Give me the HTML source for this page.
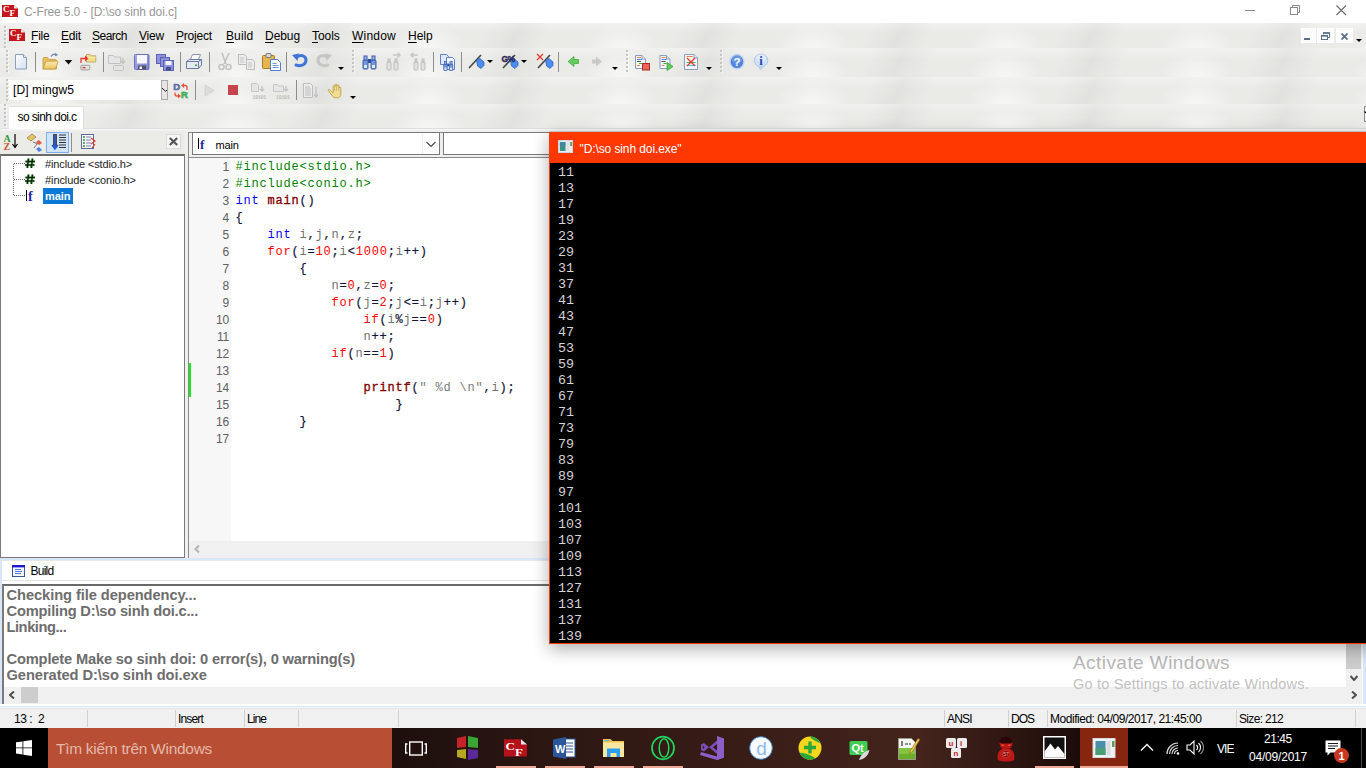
<!DOCTYPE html>
<html lang="vi">
<head>
<meta charset="utf-8">
<title>C-Free 5.0 - [D:\so sinh doi.c]</title>
<style>
*{box-sizing:border-box;margin:0;padding:0}
html,body{width:1366px;height:768px;overflow:hidden;background:#fff}
body{position:relative;font-family:"Liberation Sans",sans-serif;font-size:12px;color:#000}
.abs{position:absolute}
.t{position:absolute;white-space:pre;line-height:1}
/* textured chrome */
#chrome{position:absolute;left:0;top:23px;width:1366px;height:107px;background:#eaeae7}
#chrome i{position:absolute;left:0;width:1366px;display:block;background:
 radial-gradient(ellipse 38px 95% at 50% 100%,rgba(255,255,255,.62),rgba(255,255,255,.25) 60%,rgba(255,255,255,0) 100%) -51px 0/192px 100% repeat-x,
 linear-gradient(115deg,rgba(0,0,0,0) 0,rgba(0,0,0,0) 30%,rgba(120,120,110,.07) 45%,rgba(0,0,0,0) 60%,rgba(0,0,0,0) 100%) 45px 0/192px 100% repeat-x,
 linear-gradient(rgba(255,255,255,.35),rgba(255,255,255,0) 40%)}
#titlebar{position:absolute;left:0;top:0;width:1366px;height:23px;background:#fff}
#tabline{position:absolute;left:0;top:128px;width:1366px;height:3px;background:linear-gradient(#dededc 0,#dededc 1px,#f6f6f6 1px,#f6f6f6 2px,#f1f1f1 2px)}
#work{position:absolute;left:0;top:131px;width:1366px;height:597px;background:#f0f0f0}
/* menu */
.menu span.t{font-size:12px;top:30px;color:#000;letter-spacing:-0.2px}
.menu u{text-decoration:underline;text-underline-offset:1.5px}
/* code */
.ln{position:absolute;left:193px;width:36px;text-align:right;font-size:12px;color:#606060;letter-spacing:-0.2px;margin-top:0.8px;line-height:17px;height:17px}
.cl{position:absolute;left:235.500px;font-family:"Liberation Mono",monospace;font-size:12px;letter-spacing:0.8px;line-height:17px;height:17px;white-space:pre;color:#15153a;margin-top:0.6px;-webkit-text-stroke:0.2px #15153a}
.kw{color:#0000ff;-webkit-text-stroke:0}.fl{color:#ff0000;-webkit-text-stroke:0}.pp{color:#008000;-webkit-text-stroke:0}.fn{color:#800000;-webkit-text-stroke:0.3px #800000}.nm{color:#ff0000;-webkit-text-stroke:0}.st{color:#7a7a7a;-webkit-text-stroke:0}.id{color:#707070;-webkit-text-stroke:0}
.con{position:absolute;left:558px;font-family:"Liberation Mono",monospace;font-size:13.33px;line-height:16px;height:16px;color:#d4d4d4;white-space:pre}
.bl{position:absolute;left:6.5px;margin-top:-0.5px;font-weight:bold;font-size:14.67px;color:#6d6d6d;line-height:16px;white-space:pre}
.sb{position:absolute;top:711.700px;font-size:12px;line-height:14px;white-space:pre;color:#000}
.sep{position:absolute;top:710px;width:1px;height:17px;background:#d0d0d0}
</style>
</head>
<body>
<!-- TITLE BAR -->
<div id="titlebar"></div>
<div id="chrome"><i style="top:0;height:25px"></i><i style="top:25px;height:29px"></i><i style="top:54px;height:27px"></i><i style="top:81px;height:26px"></i></div>
<div id="tabline"></div>
<div id="work"></div>
<!-- title bar content -->
<svg class="abs" style="left:2px;top:5px" width="16" height="12" viewBox="0 1 16 14" preserveAspectRatio="none">
  <path d="M0 1h12l4 4v10H0z" fill="#c4161c"/><path d="M12 1l4 4h-4z" fill="#e9e9e9"/>
  <text x="1" y="9" font-family="Liberation Serif,serif" font-weight="bold" font-size="9" fill="#fff">C</text>
  <text x="7.5" y="14" font-family="Liberation Serif,serif" font-weight="bold" font-size="9" fill="#fff">F</text>
</svg>
<span class="t" id="ttl" style="left:24px;top:6px;font-size:12px;color:#979797;letter-spacing:-0.12px">C-Free 5.0 - [D:\so sinh doi.c]</span>
<!-- window controls -->
<div class="abs" style="left:1245px;top:10px;width:10px;height:1px;background:#8a8a8a"></div>
<svg class="abs" style="left:1290px;top:5px" width="10" height="10" viewBox="0 0 10 10" fill="none" stroke="#8a8a8a" stroke-width="1"><path d="M2.5 2.5v-2h7v7h-2"/><rect x="0.5" y="2.5" width="7" height="7"/></svg>
<svg class="abs" style="left:1336px;top:5px" width="11" height="11" viewBox="0 0 11 11" fill="none" stroke="#6a6a6a" stroke-width="1.100"><path d="M0.500 0.500l9.500 9.500M10 0.500l-9.500 9.500"/></svg>

<!-- menu bar -->
<svg class="abs" style="left:9px;top:29px" width="16" height="12" viewBox="0 1 16 14" preserveAspectRatio="none">
  <path d="M0 1h12l4 4v10H0z" fill="#c4161c"/><path d="M12 1l4 4h-4z" fill="#e9e9e9"/>
  <text x="1" y="9" font-family="Liberation Serif,serif" font-weight="bold" font-size="9" fill="#fff">C</text>
  <text x="7.5" y="14" font-family="Liberation Serif,serif" font-weight="bold" font-size="9" fill="#fff">F</text>
</svg>
<svg class="abs" style="left:0;top:24px" width="10" height="24" viewBox="0 0 10 24"><use href="#grip" x="4" y="2"/></svg>
<div class="menu">
<span class="t" style="left:31px"><u>F</u>ile</span>
<span class="t" style="left:61px"><u>E</u>dit</span>
<span class="t" style="left:92px;letter-spacing:-0.5px"><u>S</u>earch</span>
<span class="t" style="left:139px"><u>V</u>iew</span>
<span class="t" style="left:176px"><u>P</u>roject</span>
<span class="t" style="left:226px;letter-spacing:0.1px"><u>B</u>uild</span>
<span class="t" style="left:265px;letter-spacing:-0.05px"><u>D</u>ebug</span>
<span class="t" style="left:312px;letter-spacing:-0.05px"><u>T</u>ools</span>
<span class="t" style="left:352px;letter-spacing:0.2px"><u>W</u>indow</span>
<span class="t" style="left:408px;letter-spacing:0px"><u>H</u>elp</span>
</div>
<!-- mdi child controls -->
<div class="abs" style="left:1301px;top:28px;width:15px;height:15px;background:#fbfbfb;border:1px solid #fff"></div>
<div class="abs" style="left:1317px;top:28px;width:17px;height:15px;background:#fbfbfb;border:1px solid #fff"></div>
<div class="abs" style="left:1336px;top:28px;width:17px;height:15px;background:#fbfbfb;border:1px solid #fff"></div>
<div class="abs" style="left:1304px;top:38px;width:6px;height:2px;background:#5a6f8a"></div>
<svg class="abs" style="left:1321px;top:32px" width="9" height="8" viewBox="0 0 9 8" fill="none" stroke="#5a6f8a"><path d="M2.500 2.500v-1.500h6v4.500h-2" stroke-width="1"/><path d="M2 1h7" stroke-width="1.600"/><rect x="0.500" y="3.500" width="6" height="4"/><path d="M0 3.800h7" stroke-width="1.600"/></svg>
<svg class="abs" style="left:1341px;top:33px" width="7" height="7" viewBox="0 0 7 7" fill="none" stroke="#5a6f8a" stroke-width="1.800"><path d="M0.500 0.500l6 6M6.500 0.500l-6 6"/></svg>
<svg class="abs" style="left:1356px;top:39px" width="6" height="3" viewBox="0 0 6 3"><path d="M0 0h6l-3 3z" fill="#000"/></svg>
<!-- TOOLBAR 1 -->
<svg class="abs" style="left:0;top:48px" width="800" height="28" viewBox="0 0 800 28">
 <defs>
  <linearGradient id="gdoc" x1="0" y1="0" x2="1" y2="1"><stop offset="0" stop-color="#fff"/><stop offset="1" stop-color="#d3deef"/></linearGradient>
  <linearGradient id="gfold" x1="0" y1="0" x2="0" y2="1"><stop offset="0" stop-color="#fbe9b4"/><stop offset="1" stop-color="#ecc462"/></linearGradient>
  <linearGradient id="gflop" x1="0" y1="0" x2="1" y2="1"><stop offset="0" stop-color="#a8acE6"/><stop offset="1" stop-color="#7d82d0"/></linearGradient>
  <g id="grip"><path d="M1 0v24" stroke="#c4c4c2" stroke-width="2" stroke-dasharray="2 2"/><path d="M2.5 1v24" stroke="#fbfbfb" stroke-width="1" stroke-dasharray="2 2"/></g>
  <g id="dd"><path d="M0 0h6l-3 3z" fill="#000"/></g>
  <g id="sepv"><path d="M0.500 1v20" stroke="#8d8d8d"/></g>
  <g id="doc"><path d="M0.500 0.500h8l3 3v11.500h-11z" fill="url(#gdoc)" stroke="#8a9cc0"/><path d="M8.500 0.500v3h3" fill="#eef2fa" stroke="#8a9cc0"/></g>
  <g id="docg"><path d="M0.5 0.5h6l2 2v8h-8z" fill="#ededed" stroke="#bcbcbc"/><path d="M2 4h4M2 6h4M2 8h4" stroke="#c4c4c4"/></g>
  <g id="bino"><rect x="1" y="6" width="5" height="9" rx="1" fill="#7398dc" stroke="#3a5cae"/><rect x="9" y="6" width="5" height="9" rx="1" fill="#7398dc" stroke="#3a5cae"/><rect x="2" y="2" width="3" height="4" fill="#9ab4e8" stroke="#3a5cae"/><rect x="10" y="2" width="3" height="4" fill="#9ab4e8" stroke="#3a5cae"/><rect x="6" y="5" width="3" height="4" fill="#2f4f9a"/><rect x="2" y="11" width="3" height="3" fill="#dfe8fa"/><rect x="10" y="11" width="3" height="3" fill="#dfe8fa"/></g>
  <g id="binog"><rect x="1" y="6" width="4" height="8" rx="1" fill="#e2e2e2" stroke="#bdbdbd"/><rect x="8" y="6" width="4" height="8" rx="1" fill="#e2e2e2" stroke="#bdbdbd"/><rect x="2" y="3" width="2" height="3" fill="#d5d5d5" stroke="#bdbdbd"/><rect x="9" y="3" width="2" height="3" fill="#d5d5d5" stroke="#bdbdbd"/></g>
  <g id="flag"><path d="M0 14L12 1" stroke="#4a4a4a" stroke-width="1.700"/><path d="M7.500 6L11 4.600L15 8v3.500l-3 3l-3.500-2.500z" fill="#4d8df0" stroke="#2455b8" stroke-width=".7"/></g>
 </defs>
 <use href="#grip" x="6" y="2"/>
 <!-- new -->
 <use href="#doc" x="15" y="6"/>
 <use href="#sepv" x="35" y="3"/>
 <!-- open -->
 <path d="M43 21v-10.500q0-1 1-1h3.500l1.500 2h6.500q1 0 1 1v8.500z" fill="#e8c060" stroke="#c49a3a" stroke-width=".8"/><path d="M43 21l2.500-7q.3-.8 1.200-.8h10.500q1 0 .7 1l-2.400 6.800z" fill="url(#gfold)" stroke="#c49a3a" stroke-width=".8"/><path d="M51 8.500c1.500-2.500 4-3 6-1.500" fill="none" stroke="#6a7fa8" stroke-width="1.200"/><path d="M55.500 5l2.500 2.300-3.300.8z" fill="#6a7fa8"/>
 <path d="M64.700 12h7.600l-3.800 4.400z" fill="#111"/>
 <!-- open project -->
 <path d="M86.500 14v-7.500h3.500l1 1.300h4.800v6.200z" fill="#f3dc8c" stroke="#b9a05a" stroke-width=".8"/><path d="M87 9.500h8.500" stroke="#fbeeb8"/><path d="M81 15v-4.500h5" fill="none" stroke="#ee3a2e" stroke-width="1.300"/><path d="M85 7.500l3.500 3-3.500 3z" fill="#ee3a2e"/><rect x="80.800" y="17.300" width="9" height="4.600" rx="1" fill="#e4e4e4" stroke="#8d8d8d" stroke-width=".8"/><rect x="82.500" y="19" width="3" height="1.300" fill="#d33"/>
 <use href="#sepv" x="103" y="3"/>
 <!-- disabled close project -->
 <path d="M108.500 15.500v-8h5l1 1.500h6v6.500z" fill="#e6e6e6" stroke="#c2c2c2"/><rect x="113.500" y="17.500" width="10" height="5" rx="1" fill="#e4e4e4" stroke="#c2c2c2"/><path d="M123 10v5m-2-2l2 2.500 2-2.500" fill="none" stroke="#c2c2c2" stroke-width="1.4"/>
 <!-- save -->
 <rect x="134.500" y="6.500" width="14.500" height="15" rx="1" fill="url(#gflop)" stroke="#6a6fc0"/><rect x="137" y="7" width="10" height="8.500" fill="#f6f6fc"/><rect x="138" y="17.500" width="8" height="4" fill="#4e5066"/><rect x="139.500" y="18.500" width="2.500" height="2.500" fill="#f0f0f8"/>
 <!-- save all -->
 <rect x="156.500" y="6.500" width="9" height="9" fill="#8d92dc" stroke="#5a60b4"/><rect x="160.500" y="9.500" width="9" height="9" fill="#8d92dc" stroke="#5a60b4"/><rect x="163.500" y="12.500" width="10" height="10" fill="#8d92dc" stroke="#5a60b4"/><rect x="165.500" y="13" width="6" height="4" fill="#f4f4fb"/><rect x="166" y="19" width="5" height="3.500" fill="#4a4e90"/>
 <use href="#sepv" x="180" y="3"/>
 <!-- print -->
 <path d="M190.500 11.500l2-5h8l-2 5z" fill="#fff" stroke="#8a94b4"/><path d="M186.500 13.500l3-2h12v5.500l-3 3.500h-12z" fill="#e3e8f4" stroke="#6a78a4"/><path d="M186.500 13.500h12v7M198.500 13.500l3-2" fill="none" stroke="#6a78a4"/><rect x="195" y="16.500" width="2" height="1.500" fill="#3a3"/>
 <use href="#sepv" x="209" y="3"/>
 <!-- cut disabled -->
 <path d="M222 5l4 11M229 5l-5 11" stroke="#c3c3c3" stroke-width="1.600" fill="none"/><circle cx="221.500" cy="19" r="2.500" fill="none" stroke="#c3c3c3" stroke-width="1.600"/><circle cx="228.500" cy="19" r="2.500" fill="none" stroke="#c3c3c3" stroke-width="1.600"/>
 <!-- copy disabled -->
 <use href="#docg" x="238" y="6"/><use href="#docg" x="246" y="11"/>
 <!-- paste -->
 <rect x="262.500" y="7.500" width="12" height="13" rx="1" fill="#e6b54d" stroke="#a87a1c"/><rect x="266" y="5.500" width="5" height="4" rx="1" fill="#d9d9d9" stroke="#7a7a7a"/><path d="M270.500 11.500h7l3 3v8h-10z" fill="#fff" stroke="#4f7fd0"/><path d="M272.500 15.500h4M272.500 17.500h6M272.500 19.500h6" stroke="#6a98e0"/>
 <use href="#sepv" x="286" y="3"/>
 <!-- undo -->
 <path d="M296 17c6 2 10-1 10-5s-5-6-9-3" fill="none" stroke="#3f74d8" stroke-width="3" stroke-linecap="round"/><path d="M292 7l7-1.500-1.500 7.500z" fill="#3f74d8"/>
 <!-- redo disabled -->
 <path d="M328 17c-6 2-10-1-10-5s5-6 9-3" fill="none" stroke="#c6c6c6" stroke-width="3" stroke-linecap="round"/><path d="M332 7l-7-1.500 1.500 7.500z" fill="#c6c6c6"/>
 <use href="#dd" x="338" y="19"/>
 <use href="#grip" x="352" y="2"/>
 <use href="#bino" x="362" y="6"/>
 <use href="#binog" x="386" y="8"/><path d="M393 7h7m-2.500-2.500l2.500 2.500-2.500 2.500" fill="none" stroke="#c6c6c6" stroke-width="1.500"/>
 <use href="#binog" x="413" y="8"/><path d="M418 7h-7m2.500-2.500l-2.500 2.500 2.500 2.500" fill="none" stroke="#c6c6c6" stroke-width="1.500"/>
 <use href="#sepv" x="433" y="3"/>
 <!-- find in files -->
 <path d="M440.500 6.500h6l2 2v8h-8z" fill="#dfe8fa" stroke="#5b7fc9"/><path d="M446.500 9.500h6l2 2v10h-8z" fill="#eef3fd" stroke="#5b7fc9"/><g transform="translate(443,12) scale(.7)"><use href="#bino"/></g>
 <use href="#sepv" x="461" y="3"/>
 <!-- bookmarks -->
 <use href="#flag" x="469" y="6"/><use href="#dd" x="487" y="12" transform="scale(1)"/>
 <use href="#flag" x="503" y="6"/><text x="501.500" y="13.500" font-family="Liberation Sans,sans-serif" font-weight="bold" font-size="8.500" fill="#2a2a5a" stroke="#2a2a5a" stroke-width=".4" letter-spacing="-0.5">G%</text><use href="#dd" x="521" y="12"/>
 <use href="#flag" x="538" y="6"/><path d="M537 6l6 6M543 6l-6 6" stroke="#e0392d" stroke-width="1.300"/>
 <use href="#sepv" x="558" y="3"/>
 <!-- back / forward -->
 <path d="M568 13.500l6-5v3h4.500v4h-4.500v3z" fill="#62cc5e" stroke="#3aa83a" stroke-width=".7"/>
 <path d="M602 13.500l-6-5v3h-4v4h4v3z" fill="#c9c9c9"/>
 <use href="#dd" x="612" y="19"/>
 <use href="#grip" x="626" y="2"/>
 <!-- doc icons -->
 <g transform="translate(635,7)"><path d="M0.500 0.500h6.500l3.500 3.500v9.500h-10z" fill="#f4f7fc" stroke="#8a9cc0"/><path d="M7 0.500v3.500h3.500" fill="#dfe6f4" stroke="#8a9cc0"/><path d="M2 2.500h4" stroke="#e8824a"/><path d="M2 4.500h5" stroke="#4a8ae8"/><path d="M2 6.500h4" stroke="#555"/><path d="M4 8.500h4" stroke="#4ab04a"/><path d="M2 10.500h3" stroke="#e8824a"/><rect x="7.500" y="8.500" width="7" height="6.500" fill="#e8665a" stroke="#b5261c"/></g>
 <g transform="translate(659.500,7)"><path d="M0.500 0.500h6.500l3.500 3.500v9.500h-10z" fill="#f4f7fc" stroke="#8a9cc0"/><path d="M7 0.500v3.500h3.500" fill="#dfe6f4" stroke="#8a9cc0"/><path d="M2 2.500h4" stroke="#e8824a"/><path d="M2 4.500h5" stroke="#4a8ae8"/><path d="M2 6.500h4" stroke="#555"/><path d="M4 8.500h3" stroke="#4ab04a"/><path d="M2 10.500h3" stroke="#e8824a"/><path d="M7.500 7.500l6 4-6 4z" fill="#5fd05a" stroke="#2f9a2e" stroke-width=".7"/></g>
 <g transform="translate(684,6)"><path d="M0.500 0.500h9.500l3.500 3.500v11.500h-13z" fill="#f4f7fc" stroke="#8a9cc0"/><path d="M10 0.500v3.500h3.500" fill="#dfe6f4" stroke="#8a9cc0"/><path d="M2.500 2.500h6" stroke="#e8824a"/><path d="M2.500 8.500h9" stroke="#4ab04a"/><path d="M2.500 11.500h9" stroke="#4ac0e8"/><path d="M3 4l8 8M11 4l-8 8" stroke="#e0392d" stroke-width="1.300"/></g>
 <use href="#dd" x="706" y="19"/>
 <use href="#grip" x="720" y="2"/>
 <!-- help / info -->
 <circle cx="737" cy="13.700" r="7" fill="#4f84d8" stroke="#c4d6f4" stroke-width="1.400"/><circle cx="737" cy="11.500" r="5" fill="#7aa6ea" opacity=".55"/><text x="737" y="17.800" text-anchor="middle" font-family="Liberation Sans,sans-serif" font-weight="bold" font-size="11.500" fill="#fff">?</text>
 <path d="M759 18.500l1.500 3.500 3-3.500z" fill="#cfe0f8" stroke="#a4c0ec" stroke-width=".8"/><ellipse cx="761" cy="12.500" rx="6.800" ry="6.500" fill="#cfe0f8" stroke="#a4c0ec" stroke-width=".8"/><ellipse cx="761" cy="10" rx="5" ry="3.500" fill="#e8f0fc" opacity=".7"/><text x="761" y="16.500" text-anchor="middle" font-family="Liberation Serif,serif" font-weight="bold" font-size="12.500" fill="#1f47b0">i</text>
 <use href="#dd" x="776" y="19"/>
</svg>

<!-- TOOLBAR 2 -->
<div class="abs" style="left:9px;top:80px;width:152px;height:20px;background:#fff"></div>
<div class="abs" style="left:161px;top:80px;width:7px;height:20px;background:#e6e6e6;border:1px solid #a9a9a9"></div>
<svg class="abs" style="left:162px;top:86px" width="5" height="8" viewBox="0 0 5 8" fill="none" stroke="#222" stroke-width="1"><path d="M-0.500 1.500l4 3.800 2.500-2"/></svg>
<span class="t" style="left:13px;top:84px;font-size:12px;letter-spacing:0.1px" id="mingw">[D] mingw5</span>
<svg class="abs" style="left:0;top:77px" width="400" height="26" viewBox="0 0 400 26">
 <use href="#grip" x="6" y="2"/>
 <text x="173.300" y="13" font-family="Liberation Sans,sans-serif" font-weight="bold" font-size="9.500" fill="#5a6fa3" stroke="#5a6fa3" stroke-width=".6">D</text>
 <text x="181" y="21" font-family="Liberation Sans,sans-serif" font-weight="bold" font-size="9.500" fill="#3cb054" stroke="#3cb054" stroke-width=".6">R</text>
 <path d="M187 13v-2.500q0-2-2-2h-2" fill="none" stroke="#f0503a" stroke-width="1.300"/><path d="M184 6l-3 2.500 3 2.500z" fill="#f0503a"/>
 <path d="M175 15.500v1.500q0 2 2 2h2" fill="none" stroke="#f0503a" stroke-width="1.300"/><path d="M178 16.500l3 2.500-3 2.500z" fill="#f0503a"/>
 <use href="#sepv" x="195" y="2"/>
 <path d="M205 8l9 5.500-9 5.500z" fill="#dcdcdc" stroke="#c9c9c9" stroke-width=".6"/>
 <rect x="228" y="8" width="10" height="10" fill="#c8444c"/>
 <g transform="translate(251,6)"><path d="M0.500 0.500h5l2 2v6h-7z" fill="#e6e6e6" stroke="#c6c6c6"/><path d="M11 3v5m-2-2l2 2 2-2" fill="none" stroke="#c6c6c6" stroke-width="1.500"/><text x="1.500" y="16" font-family="Liberation Mono,monospace" font-size="5" fill="#bdbdbd" font-weight="bold" letter-spacing="-0.3">10101</text></g>
 <g transform="translate(273,6)"><path d="M0.500 8.500v-7h4l1 1.500h5v5.500z" fill="#e6e6e6" stroke="#c6c6c6"/><path d="M13 3v5m-2-2l2 2 2-2" fill="none" stroke="#c6c6c6" stroke-width="1.500"/><text x="3" y="16" font-family="Liberation Mono,monospace" font-size="5" fill="#bdbdbd" font-weight="bold" letter-spacing="-0.3">10101</text></g>
 <use href="#sepv" x="296" y="2"/>
 <g transform="translate(303,6)"><path d="M0.500 0.500h7l2 2v12h-9z" fill="#ececec" stroke="#bdbdbd"/><path d="M2 4h5M2 6h6M2 8h6M2 10h6M2 12h6" stroke="#bdbdbd"/><path d="M13 4v10m-2-2.500l2 2.500 2-2.500" fill="none" stroke="#c2c2c2" stroke-width="1.300"/></g>
 <!-- hand -->
 <g transform="translate(328,5.500) scale(.88)"><path d="M3 9c-2-2-4-1-2 1l4 5.500c1 1 2 2 5 2s4.500-2 4.500-4v-7c0-1.600-2-1.600-2 0v-2.500c0-1.600-2.200-1.600-2.200 0v-1c0-1.600-2.200-1.600-2.200 0v1.500c0-1.600-2.200-1.600-2.200 0v7.500z" fill="#f1dc94" stroke="#b89a3a" stroke-width=".9"/><path d="M7.400 4.500v5M9.600 3.500v6M11.800 5v4.500" stroke="#c9ac4e" stroke-width=".8" fill="none"/></g>
 <use href="#dd" x="350" y="19"/>
</svg>
<!-- TAB ROW -->
<div class="abs" style="left:9px;top:106px;width:75px;height:23px;background:#fff;border-top:1px solid #e2e2e0;border-right:1px solid #dcdcda"></div>
<svg class="abs" style="left:0;top:103px" width="10" height="26" viewBox="0 0 10 26"><use href="#grip" x="4" y="1"/></svg>
<span class="t" style="left:17.5px;top:111px;font-size:12px;letter-spacing:-0.6px" id="tabtxt">so sinh doi.c</span>
<svg class="abs" style="left:1364px;top:106px" width="2" height="16" viewBox="0 0 2 16"><rect x="0.500" y="0.500" width="4" height="15" fill="#f4f4f4" stroke="#8a8a8a"/><path d="M0 5.500h3v1.500h-2z" fill="#000"/></svg>

<!-- LEFT PANEL -->
<div class="abs" style="left:0;top:131px;width:185px;height:23px;background:#ebebe8"></div>
<div class="abs" style="left:0;top:154px;width:185px;height:404px;background:#fff;border:1px solid #7a7a7a;border-top:2px solid #6a6a6a"></div>
<div class="abs" style="left:185px;top:131px;width:4px;height:428px;background:#f0f0f0"></div>
<svg class="abs" style="left:0;top:130px" width="185" height="24" viewBox="0 0 185 24">
 <text x="3.500" y="12" font-family="Liberation Serif,serif" font-weight="bold" font-size="10" fill="#2f9a3a">A</text>
 <text x="3.500" y="20" font-family="Liberation Serif,serif" font-weight="bold" font-size="10" fill="#d0542a">Z</text>
 <path d="M15 4v13m-2.500-3l2.500 3.500 2.500-3.500" fill="none" stroke="#000" stroke-width="1.200"/>
 <path d="M27 8l5-4 4 3-5 4z" fill="#e6c36a" stroke="#9a7a2a" stroke-width=".7"/><path d="M33 12l5 2m-1 0l-3 4" fill="none" stroke="#555" stroke-width=".8"/><path d="M36 12l3-2 3 3-3 2z" fill="#e45a4a"/><path d="M36 19l3-2 3 3-3 2z" fill="#4a84e0"/>
 <rect x="46.500" y="2.500" width="22" height="20" fill="#cfe3fa" stroke="#7fb0ea"/>
 <path d="M55 4v13" stroke="#4a4a4a" stroke-width="4"/><path d="M55 5v13m-3-3l3 4 3-4" fill="none" stroke="#2a5ae0" stroke-width="1.500"/><path d="M59 5h7M59 7.500h7M59 10h7M59 12.500h7M59 15h7M59 17.500h7" stroke="#333" stroke-width="1"/>
 <path d="M71.500 3v19" stroke="#8d8d8d"/>
 <rect x="81.500" y="4.500" width="12" height="14" fill="#f6f6fb" stroke="#5b6a96"/><path d="M83 7h2M83 10h2M83 13h2M83 16h2" stroke="#3a8a3a" stroke-width="1.500"/><path d="M86 7h5M86 10h5M86 13h5M86 16h5" stroke="#7a86a6"/><path d="M91 8l4 3-4 3M95 14l-3 4" fill="none" stroke="#e0392d" stroke-width="1.200"/>
 <rect x="166.500" y="4.500" width="14" height="14" fill="#f7f7f7" stroke="#dadada"/><path d="M169.800 8l7.400 7M177.200 8l-7.400 7" stroke="#555" stroke-width="2.200"/>
</svg>
<!-- tree -->
<svg class="abs" style="left:0;top:155px" width="185" height="60" viewBox="0 0 185 60">
 <path d="M13.500 9v32M14 8.500h11M14 24.500h11M14 40.500h11" stroke="#6a6a6a" stroke-dasharray="1 1" fill="none" shape-rendering="crispEdges"/>
 <g fill="none"><path d="M28.500 3.500l-1.200 9.500M32.500 3.500l-1.200 9.500M25.500 6.500h9.500M25 10h9.500" stroke="#9ad09a" stroke-width="2.600"/><path d="M28.500 3.500l-1.200 9.500M32.500 3.500l-1.200 9.500M25.500 6.500h9.500M25 10h9.500" stroke="#0a2a0a" stroke-width="1.500"/></g>
 <g fill="none"><path d="M28.500 19.500l-1.200 9.500M32.500 19.500l-1.200 9.500M25.500 22.500h9.500M25 26h9.500" stroke="#9ad09a" stroke-width="2.600"/><path d="M28.500 19.500l-1.200 9.500M32.500 19.500l-1.200 9.500M25.500 22.500h9.500M25 26h9.500" stroke="#0a2a0a" stroke-width="1.500"/></g>
 <path d="M26.500 35v11" stroke="#000"/><text x="28" y="46" font-family="Liberation Serif,serif" font-weight="bold" font-size="14" fill="#2a1fb0">f</text>
 <rect x="43" y="33" width="30" height="16" fill="#0a79d8"/>
</svg>
<span class="t" style="left:45px;top:159px;font-size:11px;letter-spacing:-0.13px;color:#222" id="inc1">#include &lt;stdio.h&gt;</span>
<span class="t" style="left:45px;top:175px;font-size:11px;letter-spacing:-0.08px;color:#222" id="inc2">#include &lt;conio.h&gt;</span>
<span class="t" style="left:45px;top:191px;font-size:11px;letter-spacing:-0.1px;color:#fff;font-weight:bold" id="tmain">main</span>

<!-- EDITOR -->
<div class="abs" style="left:185px;top:131px;width:364px;height:26px;background:#efefed"></div>
<div class="abs" style="left:188px;top:132px;width:361px;height:1px;background:#8a8a8a"></div>
<div class="abs" style="left:188px;top:132px;width:1px;height:26px;background:#8a8a8a"></div>
<div class="abs" style="left:192px;top:132px;width:248px;height:23px;background:#fff;border:1px solid #7a7a7a"></div>
<div class="abs" style="left:422px;top:134px;width:1px;height:20px;background:#ededed"></div>
<svg class="abs" style="left:426px;top:141px" width="10" height="7" viewBox="0 0 10 7" fill="none" stroke="#444" stroke-width="1.1"><path d="M0.500 1l4.500 4.500 4.500-4.500"/></svg>
<div class="abs" style="left:443px;top:132px;width:110px;height:23px;background:#fff;border:1px solid #7a7a7a"></div>
<svg class="abs" style="left:197px;top:137px" width="12" height="14" viewBox="0 0 12 14"><path d="M1.500 1v11" stroke="#000"/><text x="3" y="12" font-family="Liberation Serif,serif" font-weight="bold" font-size="13" fill="#2a1fb0">f</text></svg>
<span class="t" style="left:215.500px;top:139.800px;font-size:11px;letter-spacing:-0.15px" id="cmain">main</span>
<div class="abs" style="left:188px;top:157px;width:361px;height:401px;background:#fff;border-left:1px solid #8a8a8a;border-top:1px solid #8a8a8a"></div>

<div class="abs" style="left:189px;top:158px;width:42px;height:383px;background:#f7f7f7"></div>
<div class="abs" style="left:189px;top:363px;width:2px;height:34px;background:#10f010"></div>
<div class="abs" style="left:189px;top:541px;width:360px;height:17px;background:#f0f0f0"></div>
<svg class="abs" style="left:194px;top:544.500px" width="6" height="8" viewBox="0 0 6 8" fill="none" stroke="#b4b4b4" stroke-width="2"><path d="M5 0.500l-3.500 3.500 3.500 3.500"/></svg>
<div class="abs" style="left:190px;top:556px;width:359px;height:2px;background:#f0f0f0"></div>
<div class="ln" style="top:158px">1</div>
<div class="cl" style="top:158px"><span class="pp">#include&lt;stdio.h&gt;</span></div>
<div class="ln" style="top:175px">2</div>
<div class="cl" style="top:175px"><span class="pp">#include&lt;conio.h&gt;</span></div>
<div class="ln" style="top:192px">3</div>
<div class="cl" style="top:192px"><span class="kw">int</span> <span class="fn">main</span>()</div>
<div class="ln" style="top:209px">4</div>
<div class="cl" style="top:209px">{</div>
<div class="ln" style="top:226px">5</div>
<div class="cl" style="top:226px">    <span class="kw">int</span> <span class="id">i</span>,<span class="id">j</span>,<span class="id">n</span>,<span class="id">z</span>;</div>
<div class="ln" style="top:243px">6</div>
<div class="cl" style="top:243px">    <span class="fl">for</span>(<span class="id">i</span>=<span class="nm">10</span>;<span class="id">i</span>&lt;<span class="nm">1000</span>;<span class="id">i</span>++)</div>
<div class="ln" style="top:260px">7</div>
<div class="cl" style="top:260px">        {</div>
<div class="ln" style="top:277px">8</div>
<div class="cl" style="top:277px">            <span class="id">n</span>=<span class="nm">0</span>,<span class="id">z</span>=<span class="nm">0</span>;</div>
<div class="ln" style="top:294px">9</div>
<div class="cl" style="top:294px">            <span class="fl">for</span>(<span class="id">j</span>=<span class="nm">2</span>;<span class="id">j</span>&lt;=<span class="id">i</span>;<span class="id">j</span>++)</div>
<div class="ln" style="top:311px">10</div>
<div class="cl" style="top:311px">                <span class="fl">if</span>(<span class="id">i</span>%<span class="id">j</span>==<span class="nm">0</span>)</div>
<div class="ln" style="top:328px">11</div>
<div class="cl" style="top:328px">                <span class="id">n</span>++;</div>
<div class="ln" style="top:345px">12</div>
<div class="cl" style="top:345px">            <span class="fl">if</span>(<span class="id">n</span>==<span class="nm">1</span>)</div>
<div class="ln" style="top:362px">13</div>
<div class="ln" style="top:379px">14</div>
<div class="cl" style="top:379px">                <span class="fn">printf</span>(<span class="st">" %d \n"</span>,<span class="id">i</span>);</div>
<div class="ln" style="top:396px">15</div>
<div class="cl" style="top:396px">                    }</div>
<div class="ln" style="top:413px">16</div>
<div class="cl" style="top:413px">        }</div>
<div class="ln" style="top:430px">17</div>
<!-- BUILD PANEL -->
<div class="abs" style="left:0;top:558px;width:1366px;height:150px;background:#d6e7f8"></div>
<div class="abs" style="left:2px;top:560px;width:1364px;height:24px;background:#fff;border-top:1px solid #e8e8e8"></div>
<div class="abs" style="left:2px;top:580px;width:1364px;height:1px;background:#e3e3e3"></div>
<svg class="abs" style="left:12px;top:565px" width="13" height="12" viewBox="0 0 13 12"><rect x="0.500" y="0.500" width="12" height="11" fill="#f4f7fc" stroke="#3c5a9a"/><path d="M0 1.200h13" stroke="#1a1ac8" stroke-width="2.400"/><path d="M3 4.500h6M3 6.500h7M3 8.500h6" stroke="#4a7ae0"/></svg>
<span class="t" style="left:30.500px;top:565px;font-size:12px;letter-spacing:-0.74px" id="buildtab">Build</span>
<div class="abs" style="left:2px;top:584px;width:1364px;height:120px;background:#fff;border-left:2px solid #7a7a7a;border-top:2px solid #696969"></div>
<div class="bl" style="top:587px;letter-spacing:-0.07px">Checking file dependency...</div>
<div class="bl" style="top:603px;letter-spacing:-0.19px">Compiling D:\so sinh doi.c...</div>
<div class="bl" style="top:619px;letter-spacing:-0.45px">Linking...</div>
<div class="bl" style="top:651px;letter-spacing:-0.16px">Complete Make so sinh doi: 0 error(s), 0 warning(s)</div>
<div class="bl" style="top:667px;letter-spacing:-0.06px">Generated D:\so sinh doi.exe</div>
<div class="abs" style="left:4px;top:687px;width:1358px;height:17px;background:#f0f0f0"></div>
<svg class="abs" style="left:9px;top:691px" width="6" height="8" viewBox="0 0 6 8" fill="none" stroke="#505050" stroke-width="2"><path d="M5 0.500l-4 3.500 4 3.500"/></svg>
<div class="abs" style="left:21px;top:687px;width:17px;height:16px;background:#cdcdcd"></div>
<svg class="abs" style="left:1351px;top:691px" width="6" height="8" viewBox="0 0 6 8" fill="none" stroke="#505050" stroke-width="2"><path d="M1 0.500l4 3.500-4 3.500"/></svg>
<div class="abs" style="left:1346px;top:644px;width:16px;height:43px;background:#f0f0f0"></div>
<div class="abs" style="left:1362px;top:644px;width:1px;height:62px;background:#fafafa"></div>
<div class="abs" style="left:1363px;top:644px;width:3px;height:63px;background:#d6e7f8"></div>
<div class="abs" style="left:1346px;top:644px;width:15px;height:25px;background:#cdcdcd"></div>
<svg class="abs" style="left:1349.500px;top:675px" width="8" height="6" viewBox="0 0 8 6" fill="none" stroke="#505050" stroke-width="2"><path d="M0.500 1l3.500 4 3.500-4"/></svg>
<div class="abs" style="left:0;top:704px;width:1366px;height:1.500px;background:#fff"></div>
<span class="t" style="left:1073px;top:653px;font-size:19px;color:#b9b9b9;letter-spacing:0.44px" id="aw1">Activate Windows</span>
<span class="t" style="left:1073px;top:677px;font-size:14.500px;color:#c2c2c2;letter-spacing:0.2px" id="aw2">Go to Settings to activate Windows.</span>
<!-- STATUS BAR -->
<div class="abs" style="left:0;top:707px;width:1366px;height:21px;background:#f0f0f0;border-top:1px solid #f7f7f7;box-shadow:inset 0 2px 0 -1px #e3e3e3"></div>
<div class="sep" style="left:87px"></div>
<div class="sep" style="left:175px"></div>
<div class="sep" style="left:244px"></div>
<div class="sep" style="left:298px"></div>
<div class="sep" style="left:398px"></div>
<div class="sep" style="left:944px"></div>
<div class="sep" style="left:1008px"></div>
<div class="sep" style="left:1047px"></div>
<div class="sep" style="left:1236px"></div>
<div class="sep" style="left:1355px"></div>
<span class="sb" style="left:14px;letter-spacing:-0.45px">13 :  2</span>
<span class="sb" style="left:178px;letter-spacing:-0.84px">Insert</span>
<span class="sb" style="left:247px;letter-spacing:-0.9px">Line</span>
<span class="sb" style="left:947px;letter-spacing:-0.83px">ANSI</span>
<span class="sb" style="left:1011px;letter-spacing:-1px">DOS</span>
<span class="sb" style="left:1050px;letter-spacing:-0.47px" id="modif">Modified: 04/09/2017, 21:45:00</span>
<span class="sb" style="left:1239px;letter-spacing:-0.67px">Size: 212</span>
<!-- CONSOLE -->
<div class="abs" style="left:549px;top:131px;width:817px;height:1px;background:#cdd3d6"></div>
<div class="abs" style="left:549px;top:132px;width:830px;height:512px;background:#000;border-left:1px solid #ff3700;border-bottom:1px solid #ff3700;box-shadow:0 5px 16px rgba(0,0,0,.32)"></div>
<div class="abs" style="left:549px;top:132px;width:817px;height:31px;background:#ff3700"></div>
<svg class="abs" style="left:558px;top:140px" width="15" height="13" viewBox="0 0 16 13" preserveAspectRatio="none"><rect x="0.500" y="0.500" width="15" height="12" fill="#e8eef2" stroke="#cdd6dc"/><rect x="2" y="2" width="6" height="9" fill="#3f8f86"/><rect x="2" y="2" width="6" height="4" fill="#4a7fb0" opacity=".6"/><rect x="9" y="2" width="3" height="9" fill="#e0e0e0"/><rect x="13" y="2" width="2" height="4" fill="#5aa05a"/></svg>
<span class="t" style="left:579.5px;top:142.5px;font-size:12px;color:#fff;letter-spacing:-0.1px" id="contitle">"D:\so sinh doi.exe"</span>
<div class="con" style="top:165px">11</div>
<div class="con" style="top:181px">13</div>
<div class="con" style="top:197px">17</div>
<div class="con" style="top:213px">19</div>
<div class="con" style="top:229px">23</div>
<div class="con" style="top:245px">29</div>
<div class="con" style="top:261px">31</div>
<div class="con" style="top:277px">37</div>
<div class="con" style="top:293px">41</div>
<div class="con" style="top:309px">43</div>
<div class="con" style="top:325px">47</div>
<div class="con" style="top:341px">53</div>
<div class="con" style="top:357px">59</div>
<div class="con" style="top:373px">61</div>
<div class="con" style="top:389px">67</div>
<div class="con" style="top:405px">71</div>
<div class="con" style="top:421px">73</div>
<div class="con" style="top:437px">79</div>
<div class="con" style="top:453px">83</div>
<div class="con" style="top:469px">89</div>
<div class="con" style="top:485px">97</div>
<div class="con" style="top:501px">101</div>
<div class="con" style="top:517px">103</div>
<div class="con" style="top:533px">107</div>
<div class="con" style="top:549px">109</div>
<div class="con" style="top:565px">113</div>
<div class="con" style="top:581px">127</div>
<div class="con" style="top:597px">131</div>
<div class="con" style="top:613px">137</div>
<div class="con" style="top:629px">139</div>
<!-- TASKBAR -->
<div class="abs" style="left:392px;top:728px;width:736px;height:40px;background:linear-gradient(90deg,#1d0f0c 0,#2c1712 20%,#371c16 45%,#44241d 72%,#2e1611 84%,#0e0605 100%)"></div>
<div class="abs" style="left:0;top:728px;width:48px;height:40px;background:#000"></div>
<div class="abs" style="left:48px;top:728px;width:344px;height:40px;background:#b84e33"></div>
<div class="abs" style="left:1128px;top:728px;width:238px;height:40px;background:#000"></div>
<svg class="abs" style="left:16px;top:740px" width="16" height="16" viewBox="0 0 16 16" fill="#fff"><path d="M0 2.300l6.500-.900v6.100h-6.500zM7.300 1.300l8.700-1.300v7.500h-8.700zM0 8.300h6.500v6.100l-6.500-.900zM7.300 8.300h8.700v7.700l-8.700-1.300z"/></svg>
<span class="t" style="left:56px;top:740.600px;font-size:15.500px;color:#e3b9ab;letter-spacing:-0.28px" id="tsearch">Tìm kiếm trên Windows</span>
<!-- task view -->
<svg class="abs" style="left:405px;top:741px" width="22" height="15" viewBox="0 0 22 15" fill="none" stroke="#fff" stroke-width="1.400"><rect x="4.700" y="1" width="12.600" height="13"/><path d="M2.500 3h-1.800v9h1.800M19.500 3h1.800v9h-1.800"/></svg>
<!-- app icons -->
<svg class="abs" style="left:440px;top:728px" width="690" height="40" viewBox="0 0 690 40">
 <!-- colorful cube -->
 <g transform="translate(17,8)"><path d="M0 2l9-2v11l-9 1z" fill="#c8232a"/><path d="M11 0l10 2v10l-10-1z" fill="#3aa635"/><path d="M0 14l9-1v10l-9-2z" fill="#b8a81f"/><path d="M11 13l10 1v8l-10 2z" fill="#5a2a9a"/></g>
 <!-- CF -->
 <g transform="translate(64,10.500) scale(1,.86)"><path d="M0 1h17l6 6v14H0z" fill="#b5121b"/><path d="M17 1l6 6h-6z" fill="#e6e6e6"/><text x="1.500" y="13" font-family="Liberation Serif,serif" font-weight="bold" font-size="13" fill="#fff">C</text><text x="11" y="20" font-family="Liberation Serif,serif" font-weight="bold" font-size="13" fill="#fff">F</text></g>
 <!-- Word -->
 <g transform="translate(113,9)"><rect x="8" y="2" width="14" height="18" fill="#fff" stroke="#2b579a"/><path d="M12 6h8M12 9h8M12 12h8M12 15h8" stroke="#2b579a"/><path d="M0 2.500l13-2.500v22l-13-2.500z" fill="#2b579a"/><text x="2" y="15.500" font-family="Liberation Sans,sans-serif" font-weight="bold" font-size="11" fill="#fff">W</text></g>
 <!-- Explorer -->
 <g transform="translate(163,10)"><path d="M0 1h7.500l2 2h11.500v16H0z" fill="#f2c34a"/><path d="M0 4.500h21v14.500H0z" fill="#fbe6a0"/><rect x="1.500" y="2" width="5" height="1.200" fill="#4ab8f0"/><path d="M4 10.500h13v8.500h-3.500v-4h-6v4H4z" fill="#2a9df4"/></g>
 <!-- opera-like ring -->
 <g transform="translate(211,8)"><ellipse cx="12" cy="12" rx="11" ry="11.300" fill="none" stroke="#1fd660" stroke-width="1.700"/><ellipse cx="13" cy="12" rx="4.800" ry="9.300" fill="none" stroke="#1fd660" stroke-width="1.500"/></g>
 <!-- VS -->
 <g transform="translate(260,8)"><path d="M17 0l7 2.500v19l-7 2.500z" fill="#8a5fc8"/><path d="M17 4.500v13.500l-8-6.700zM9 11.300l-5 4.200-3-1.500v-5.500l3-1.500z" fill="#7a4fb5"/><path d="M17 8v6.500l-4-3.200zM2.800 9.700v3.200l1.800-1.600z" fill="#2e1813"/><path d="M0 19l17 5 7-2.500v-3l-7 2-16-4.500z" fill="#8a5fc8"/></g>
 <!-- d circle -->
 <g transform="translate(309,8)"><circle cx="12" cy="12" r="11.300" fill="#f6f9fd" stroke="#3a8ad0" stroke-width=".9"/><text x="12.500" y="18.500" text-anchor="middle" font-family="Liberation Sans,sans-serif" font-size="19" fill="#8fbbe8">d</text></g>
 <!-- 360 plus -->
 <g transform="translate(358,8)"><clipPath id="c360"><circle cx="12" cy="12" r="11.500"/></clipPath><circle cx="12" cy="12" r="11.500" fill="#f5d61f"/><g clip-path="url(#c360)" fill="#2aa83a"><ellipse cx="8" cy="23" rx="13" ry="5" transform="rotate(18 8 23)"/><ellipse cx="19" cy="2" rx="9" ry="3.500" transform="rotate(28 19 2)"/></g><path d="M12 5.500v12M6 11.500h12" stroke="#2aa83a" stroke-width="3.400"/></g>
 <!-- Qt -->
 <g transform="translate(409,10)"><rect x="0.500" y="3" width="18" height="14" rx="1.500" fill="#41cd52"/><text x="2.500" y="14" font-family="Liberation Sans,sans-serif" font-weight="bold" font-size="11" fill="#fff">Qt</text><path d="M10 22c2-6 6-9 10.500-10-1 5-4.500 9-10.500 10z" fill="#d9d9d9"/></g>
 <!-- notepad++ like -->
 <g transform="translate(456,8)"><path d="M2.500 2.500h13l4 4v17h-17z" fill="#f6f6f2" stroke="#9a9a8a"/><rect x="3" y="12" width="16" height="11" fill="#86c440"/><rect x="3" y="18" width="16" height="5" fill="#6aae2a"/><path d="M6 5v5M9 8h3M13 8h2" stroke="#333" stroke-width="1.200"/><path d="M22 2.500l-7.500 12-1.200 3.500 3-2.200 7.500-12z" fill="#f2c94a" stroke="#8a6a1a" stroke-width=".6"/></g>
 <!-- unikey blocks -->
 <g transform="translate(506,10)"><rect x="0" y="0" width="10" height="10" rx="1.500" fill="#ececec"/><rect x="11" y="0" width="10" height="10" rx="1.500" fill="#ececec"/><rect x="5" y="10" width="10" height="10" rx="1.500" fill="#ececec"/><text x="2.500" y="8" font-family="Liberation Sans,sans-serif" font-weight="bold" font-size="8" fill="#c8232a">u</text><text x="14" y="8" font-family="Liberation Sans,sans-serif" font-weight="bold" font-size="8" fill="#c8232a">i</text><text x="7.500" y="18" font-family="Liberation Sans,sans-serif" font-weight="bold" font-size="8" fill="#c8232a">n</text></g>
 <!-- red figure -->
 <g transform="translate(556,8)"><path d="M2 24c-2-8 3-12 8-12s10 4 8 12c-4 2-12 2-16 0z" fill="#c01818"/><ellipse cx="10" cy="7.500" rx="6.500" ry="6" fill="#b81515"/><path d="M3.500 6a6.500 5.500 0 0 1 13 0l-2 1.500h-9z" fill="#2a0808"/><path d="M5.500 8l3.500 1.200-3 .8zM14.500 8l-3.500 1.200 3 .8z" fill="#ff5a3a"/><circle cx="10" cy="18" r="3.800" fill="#8a0f0f" stroke="#e04a3a" stroke-width=".6"/><text x="10" y="20" text-anchor="middle" font-family="Liberation Sans,sans-serif" font-size="5" fill="#f0b0a0">57</text></g>
 <!-- photos -->
 <g transform="translate(603,8)"><rect x="0" y="0" width="23" height="23" fill="#fff"/><rect x="1.500" y="1.500" width="20" height="20" fill="#111"/><path d="M1.500 21.500v-6l6-8 4.500 6 3-3.500 6.500 8v3.500z" fill="#fff"/></g>
 <!-- active app (console) -->
 <rect x="640" y="0" width="48" height="40" fill="#86260f"/>
 <g transform="translate(652.500,10)"><rect x="0.500" y="0.500" width="22" height="19" fill="#eef2f5" stroke="#d5dce2"/><rect x="3" y="3" width="10" height="14" fill="#4a8fa8"/><rect x="3" y="10" width="10" height="7" fill="#4aa06a" opacity=".8"/><rect x="14" y="3" width="4" height="14" fill="#d9dde0"/><rect x="19.500" y="3" width="2.500" height="6" fill="#5aa05a"/></g>
 <!-- running indicators -->
 <rect x="56" y="38" width="40" height="2" fill="#f0a896"/>
 <rect x="105" y="38" width="40" height="2" fill="#f0a896"/>
 <rect x="154" y="38" width="40" height="2" fill="#f0a896"/>
 <rect x="203" y="38" width="40" height="2" fill="#f0a896"/>
 <rect x="595" y="38" width="39" height="2" fill="#f0a896"/>
 <rect x="640" y="38" width="48" height="2" fill="#f0a896"/>
</svg>
<!-- tray -->
<svg class="abs" style="left:1140px;top:743px" width="14" height="9" viewBox="0 0 14 9" fill="none" stroke="#fff" stroke-width="1.300"><path d="M1 7.500l6-6 6 6"/></svg>
<svg class="abs" style="left:1164px;top:738px" width="18" height="18" viewBox="0 0 18 18" fill="none" stroke="#d8d8d8" stroke-width="1.200"><path d="M3 16a11 11 0 0 1 11-11M5.500 16a8.500 8.500 0 0 1 8.500-8.500M8 16a6 6 0 0 1 6-6M10.500 16a3.500 3.500 0 0 1 3.500-3.500"/><circle cx="14" cy="15.500" r="1.300" fill="#fff" stroke="none"/></svg>
<svg class="abs" style="left:1186px;top:740px" width="20" height="15" viewBox="0 0 20 15" fill="none" stroke="#fff" stroke-width="1.100"><path d="M1 5h3l4-4v13l-4-4h-3z"/><path d="M10.500 5a3.500 3.500 0 0 1 0 5M12.500 3a6 6 0 0 1 0 9" /><path d="M14.500 1a8.500 8.500 0 0 1 0 13" stroke="#8a8a8a"/></svg>
<span class="t" style="left:1217px;top:743px;font-size:12px;color:#fff;letter-spacing:-0.9px">VIE</span>
<div class="abs" style="left:1361px;top:728px;width:1px;height:40px;background:#4a4a4a"></div>
<span class="t" style="left:1264px;top:733px;font-size:12px;color:#fff;letter-spacing:-0.45px" id="clk">21:45</span>
<span class="t" style="left:1249px;top:751px;font-size:12px;color:#fff;letter-spacing:-0.2px" id="dte">04/09/2017</span>
<svg class="abs" style="left:1325px;top:740px" width="26" height="24" viewBox="0 0 26 24"><path d="M0.500 0.500h15v12h-10l-3 3v-3h-2z" fill="#fff"/><path d="M3 3.500h10M3 6h10M3 8.500h7" stroke="#000" stroke-width=".9"/><circle cx="16.500" cy="15.500" r="7.500" fill="#c8381f"/><text x="16.500" y="19.500" text-anchor="middle" font-family="Liberation Sans,sans-serif" font-weight="bold" font-size="11" fill="#fff">1</text></svg>

<!--SECTIONS-->
</body>
</html>
